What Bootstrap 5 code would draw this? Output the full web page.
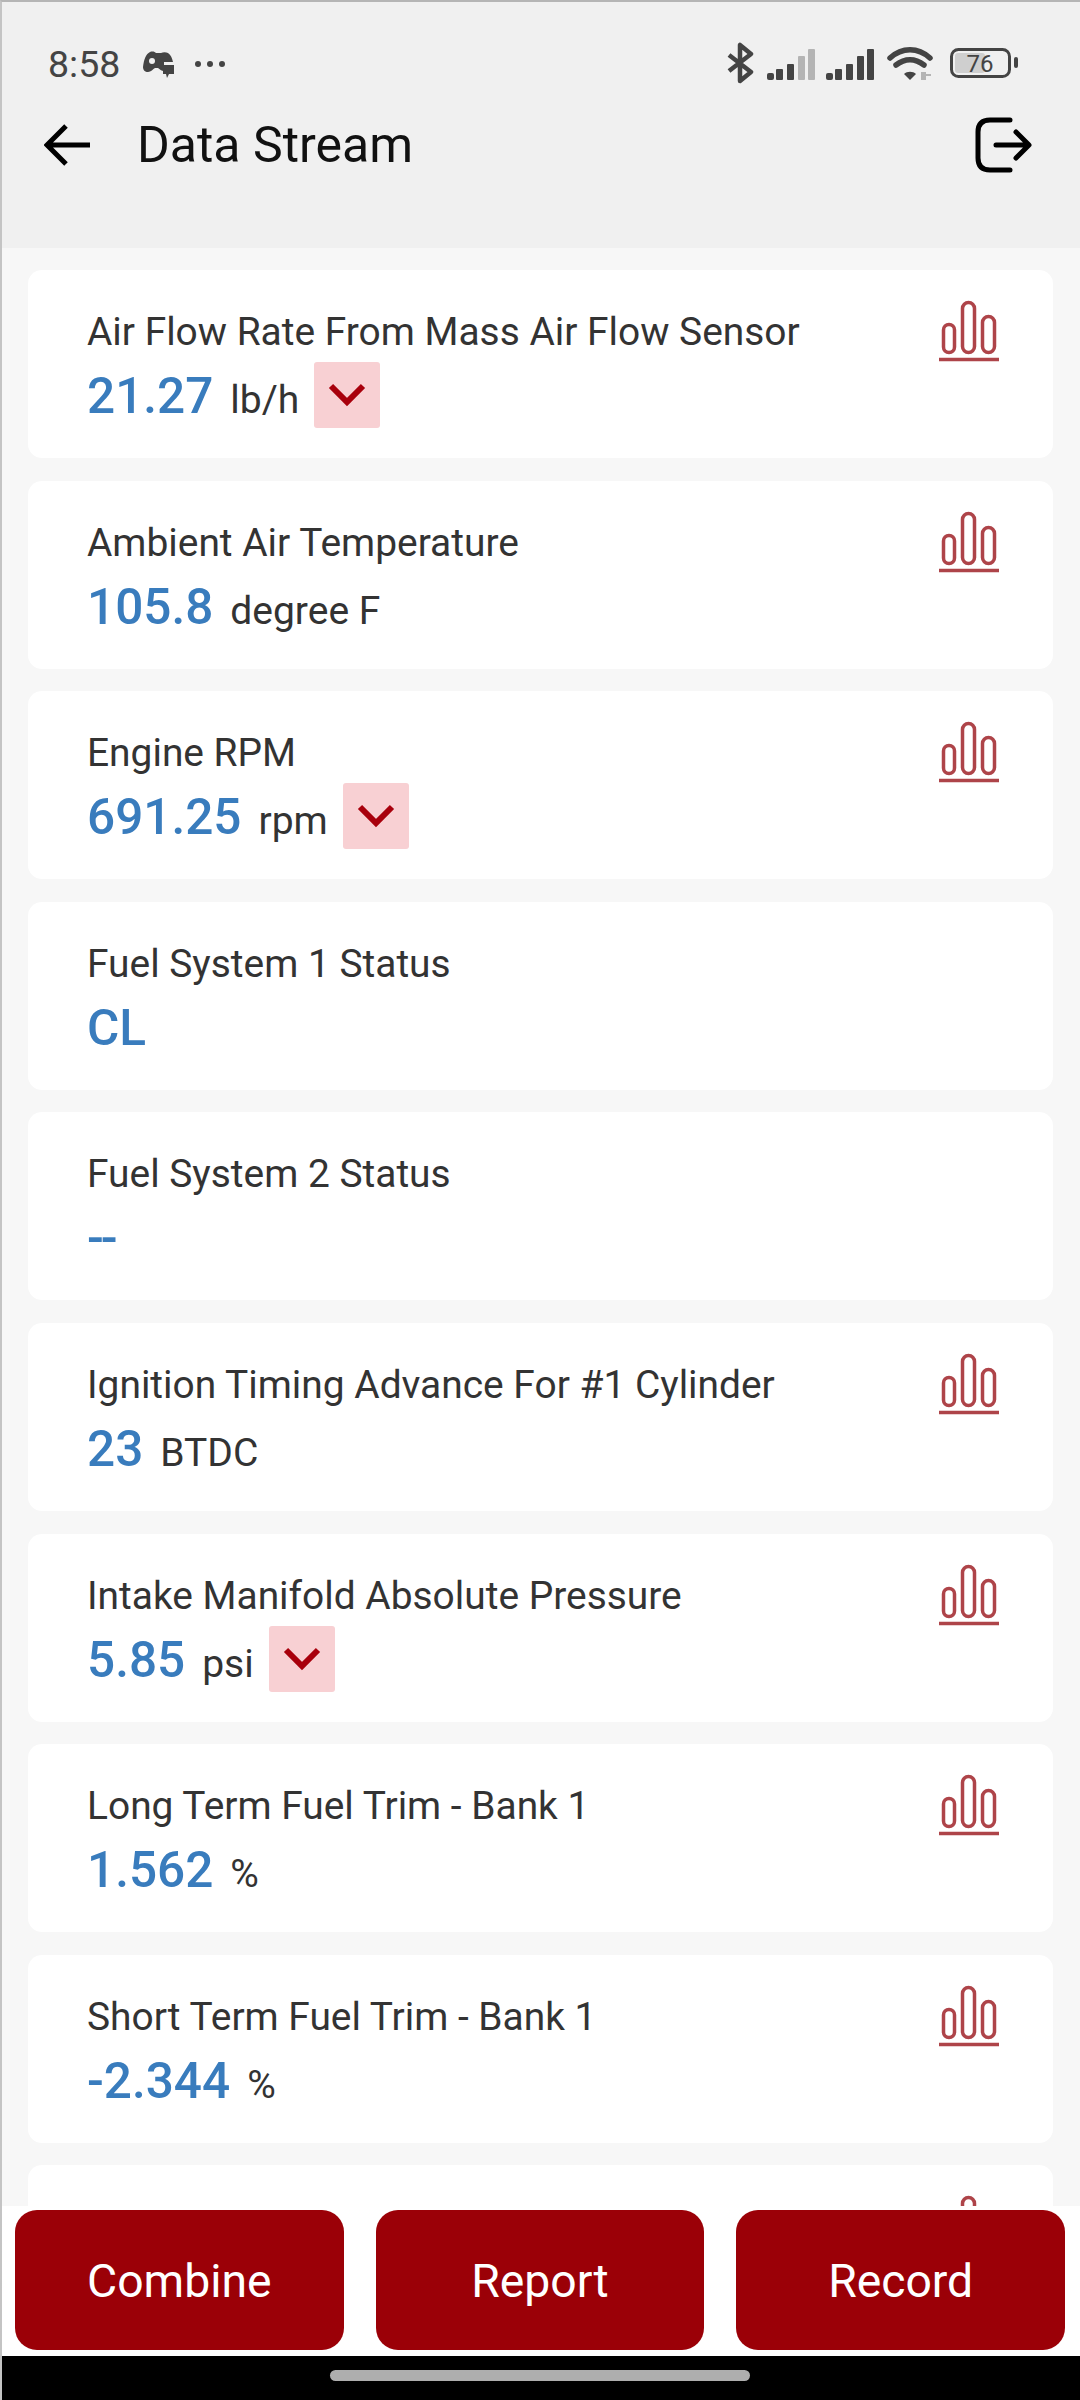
<!DOCTYPE html>
<html lang="en">
<head>
    <meta charset="UTF-8">
    <meta name="viewport" content="width=device-width, initial-scale=1.0">
    <title>Data Stream</title>
    <link href="https://cdn.jsdelivr.net/npm/bootstrap@5.3.0/dist/css/bootstrap.min.css" rel="stylesheet">
    <style>
        body {
            background: #f7f7f7;
            font-family: Roboto, "Liberation Sans", sans-serif;
        }
        .screen {
            height: 2400px;
            overflow: hidden;
            border-top: 2px solid #b5b5b5;
            border-left: 2px solid #c4c4c4;
        }
        .top-area {
            height: 246px;
            background: #f0f0f0;
            flex: none;
        }
        .status-row {
            height: 103px;
            padding: 31px 58px 10px 46px;
            color: #444;
        }
        .clock {
            font-size: 37.5px;
            line-height: 40px;
            margin-right: 22px;
        }
        .more-dots {
            margin-left: 20px;
        }
        .status-icons {
            margin-left: auto;
        }
        .title-row {
            height: 80px;
            padding: 0 48px 0 42px;
        }
        .screen-title {
            font-size: 50px;
            font-weight: 400;
            color: #111;
            margin: 0 0 0 45px;
        }
        .stream-list {
            flex: 1 1 auto;
            min-height: 0;
            overflow: hidden;
            padding: 22px 27px 0 26px;
            gap: 22.6px;
        }
        .data-item {
            flex: none;
            height: 188px;
            background: #fff;
            border-radius: 14px;
            padding: 40px 54px 0 59px;
        }
        .trend-icon {
            margin-top: -11px;
            flex: none;
        }
        .item-name {
            font-size: 38.9px;
            line-height: 44px;
            color: #333;
        }
        .value-row {
            height: 66px;
            margin-top: 8px;
        }
        .item-value {
            font-size: 49.5px;
            font-weight: 500;
            color: #397cbd;
            line-height: 68px;
        }
        .tight-dash {
            letter-spacing: -3px;
        }
        .item-unit {
            font-size: 39px;
            color: #333;
            margin-left: 17px;
        }
        .trend-box {
            width: 66px;
            height: 66px;
            margin-left: 15px;
            background: #f8d0d3;
            border-radius: 3px;
            align-self: center;
        }
        .bottom-bar {
            flex: none;
            height: 150px;
            background: #fff;
            padding: 4px 15px 6px 13px;
            gap: 32px;
        }
        .action-btn {
            flex: 1 1 0;
            background: #9b0007;
            color: #fff;
            border: 0;
            border-radius: 22px;
            padding-top: 10px;
            font-size: 46.3px;
            font-family: Roboto, sans-serif;
        }
        .nav-strip {
            flex: none;
            height: 44px;
            background: #000;
            margin-left: -2px;
        }
        .home-pill {
            width: 420px;
            height: 11px;
            margin: 14px auto 0;
            background: #aeaeae;
            border-radius: 6px;
        }
    </style>
</head>
<body>
    <div class="screen d-flex flex-column">
        <div class="top-area">
            <div class="status-row d-flex align-items-center">
                <span class="clock">8:58</span>
                <svg width="32" height="28" viewBox="0 0 32 28"><path d="M1 17C2 9 4 4 8 2c3-1 5 0 6 1h5c2-1 5-1 7 0 3 2 4 5 5 9h-9v9c-3 0-4-2-6-3h-3c-2 1-4 4-7 4-3 0-5-2-5-5z" fill="#444"/><circle cx="10" cy="11" r="3" fill="#f0f0f0"/><path d="M21 15h11v9h-5l-2 4-1-4h-3z" fill="#444"/></svg>
                <svg class="more-dots" width="32" height="8" viewBox="0 0 32 8"><circle cx="4" cy="4" r="3" fill="#444"/><circle cx="16" cy="4" r="3" fill="#444"/><circle cx="28" cy="4" r="3" fill="#444"/></svg>
                <svg class="status-icons" width="296" height="44" viewBox="0 0 296 44">
                    <path d="M3 29 25 12 14 3v36l11-9L3 13" fill="none" stroke="#444" stroke-width="4.5" stroke-linejoin="round"/>
                    <g fill="#444">
                        <rect x="41" y="31" width="7" height="7" rx="2"/><rect x="50" y="27" width="7" height="11" rx="1"/><rect x="61" y="22" width="7" height="16" rx="1"/>
                        <rect x="72" y="14" width="7" height="24" rx="1" fill="#b4b4b4"/><rect x="82" y="7" width="7" height="31" rx="1" fill="#b4b4b4"/>
                        <rect x="100" y="31" width="7" height="7" rx="2"/><rect x="109" y="27" width="7" height="11" rx="1"/><rect x="120" y="22" width="7" height="16" rx="1"/><rect x="131" y="14" width="7" height="24" rx="1"/><rect x="141" y="7" width="7" height="31" rx="1"/>
                        <path d="M184 38l-6-6c3-3 9-3 12 0z"/>
                        <path d="M195 30h5v2h5v2h-5v4h-5z" fill="#b4b4b4"/>
                    </g>
                    <path d="M164 16c12-11 28-11 40 0M170 23c9-7 19-7 28 0" fill="none" stroke="#444" stroke-width="5.5" stroke-linecap="round"/>
                    <rect x="225.500" y="7.500" width="58" height="27" rx="7" fill="none" stroke="#444" stroke-width="3"/>
                    <rect x="229" y="11" width="30" height="20" rx="3" fill="#cfcfcf"/>
                    <rect x="288" y="15" width="4" height="11" rx="2" fill="#444"/>
                    <text x="254" y="30" font-size="24" fill="#444" text-anchor="middle" font-family="Roboto">76</text>
                </svg>
            </div>
            <div class="title-row d-flex align-items-center">
                <svg width="48" height="44" viewBox="0 0 48 44"><path d="M46 22H4M22 3 3 22l19 19" fill="none" stroke="#000" stroke-width="5"/></svg>
                <h1 class="screen-title">Data Stream</h1>
                <svg class="ms-auto" width="58" height="56" viewBox="0 0 58 56"><path d="M36 3H16C8 3 4 7 4 15v26c0 8 4 12 12 12h20" fill="none" stroke="#000" stroke-width="5" stroke-linecap="round"/><path d="M22 28h32M42 15l13 13-13 13" fill="none" stroke="#000" stroke-width="5" stroke-linecap="round" stroke-linejoin="round"/></svg>
            </div>
        </div>

        <div class="stream-list d-flex flex-column">
            <div class="data-item d-flex justify-content-between">
                <div>
                    <div class="item-name">Air Flow Rate From Mass Air Flow Sensor</div>
                    <div class="value-row d-flex align-items-baseline"><span class="item-value">21.27</span><span class="item-unit">lb/h</span><span class="trend-box d-flex align-items-center justify-content-center"><svg width="38" height="24" viewBox="0 0 38 24"><path d="M3 3l16 16L35 3" fill="none" stroke="#a8000c" stroke-width="6"/></svg></span></div>
                </div>
                <svg class="trend-icon" width="60" height="64" viewBox="0 0 60 64"><g fill="none" stroke="#ae4449" stroke-width="3.500"><rect x="4.500" y="25.500" width="11" height="28" rx="5.500"/><rect x="23.500" y="3.500" width="12" height="50" rx="6"/><rect x="43.500" y="17.500" width="12" height="36" rx="6"/><path d="M0 60.500h60"/></g></svg>
            </div>
            <div class="data-item d-flex justify-content-between">
                <div>
                    <div class="item-name">Ambient Air Temperature</div>
                    <div class="value-row d-flex align-items-baseline"><span class="item-value">105.8</span><span class="item-unit">degree F</span></div>
                </div>
                <svg class="trend-icon" width="60" height="64" viewBox="0 0 60 64"><g fill="none" stroke="#ae4449" stroke-width="3.500"><rect x="4.500" y="25.500" width="11" height="28" rx="5.500"/><rect x="23.500" y="3.500" width="12" height="50" rx="6"/><rect x="43.500" y="17.500" width="12" height="36" rx="6"/><path d="M0 60.500h60"/></g></svg>
            </div>
            <div class="data-item d-flex justify-content-between">
                <div>
                    <div class="item-name">Engine RPM</div>
                    <div class="value-row d-flex align-items-baseline"><span class="item-value">691.25</span><span class="item-unit">rpm</span><span class="trend-box d-flex align-items-center justify-content-center"><svg width="38" height="24" viewBox="0 0 38 24"><path d="M3 3l16 16L35 3" fill="none" stroke="#a8000c" stroke-width="6"/></svg></span></div>
                </div>
                <svg class="trend-icon" width="60" height="64" viewBox="0 0 60 64"><g fill="none" stroke="#ae4449" stroke-width="3.500"><rect x="4.500" y="25.500" width="11" height="28" rx="5.500"/><rect x="23.500" y="3.500" width="12" height="50" rx="6"/><rect x="43.500" y="17.500" width="12" height="36" rx="6"/><path d="M0 60.500h60"/></g></svg>
            </div>
            <div class="data-item">
                <div class="item-name">Fuel System 1 Status</div>
                <div class="value-row d-flex align-items-baseline"><span class="item-value">CL</span></div>
            </div>
            <div class="data-item">
                <div class="item-name">Fuel System 2 Status</div>
                <div class="value-row d-flex align-items-baseline"><span class="item-value tight-dash">--</span></div>
            </div>
            <div class="data-item d-flex justify-content-between">
                <div>
                    <div class="item-name">Ignition Timing Advance For #1 Cylinder</div>
                    <div class="value-row d-flex align-items-baseline"><span class="item-value">23</span><span class="item-unit">BTDC</span></div>
                </div>
                <svg class="trend-icon" width="60" height="64" viewBox="0 0 60 64"><g fill="none" stroke="#ae4449" stroke-width="3.500"><rect x="4.500" y="25.500" width="11" height="28" rx="5.500"/><rect x="23.500" y="3.500" width="12" height="50" rx="6"/><rect x="43.500" y="17.500" width="12" height="36" rx="6"/><path d="M0 60.500h60"/></g></svg>
            </div>
            <div class="data-item d-flex justify-content-between">
                <div>
                    <div class="item-name">Intake Manifold Absolute Pressure</div>
                    <div class="value-row d-flex align-items-baseline"><span class="item-value">5.85</span><span class="item-unit">psi</span><span class="trend-box d-flex align-items-center justify-content-center"><svg width="38" height="24" viewBox="0 0 38 24"><path d="M3 3l16 16L35 3" fill="none" stroke="#a8000c" stroke-width="6"/></svg></span></div>
                </div>
                <svg class="trend-icon" width="60" height="64" viewBox="0 0 60 64"><g fill="none" stroke="#ae4449" stroke-width="3.500"><rect x="4.500" y="25.500" width="11" height="28" rx="5.500"/><rect x="23.500" y="3.500" width="12" height="50" rx="6"/><rect x="43.500" y="17.500" width="12" height="36" rx="6"/><path d="M0 60.500h60"/></g></svg>
            </div>
            <div class="data-item d-flex justify-content-between">
                <div>
                    <div class="item-name">Long Term Fuel Trim - Bank 1</div>
                    <div class="value-row d-flex align-items-baseline"><span class="item-value">1.562</span><span class="item-unit">%</span></div>
                </div>
                <svg class="trend-icon" width="60" height="64" viewBox="0 0 60 64"><g fill="none" stroke="#ae4449" stroke-width="3.500"><rect x="4.500" y="25.500" width="11" height="28" rx="5.500"/><rect x="23.500" y="3.500" width="12" height="50" rx="6"/><rect x="43.500" y="17.500" width="12" height="36" rx="6"/><path d="M0 60.500h60"/></g></svg>
            </div>
            <div class="data-item d-flex justify-content-between">
                <div>
                    <div class="item-name">Short Term Fuel Trim - Bank 1</div>
                    <div class="value-row d-flex align-items-baseline"><span class="item-value">-2.344</span><span class="item-unit">%</span></div>
                </div>
                <svg class="trend-icon" width="60" height="64" viewBox="0 0 60 64"><g fill="none" stroke="#ae4449" stroke-width="3.500"><rect x="4.500" y="25.500" width="11" height="28" rx="5.500"/><rect x="23.500" y="3.500" width="12" height="50" rx="6"/><rect x="43.500" y="17.500" width="12" height="36" rx="6"/><path d="M0 60.500h60"/></g></svg>
            </div>
            <div class="data-item d-flex justify-content-end">
                <svg class="trend-icon" width="60" height="64" viewBox="0 0 60 64"><g fill="none" stroke="#ae4449" stroke-width="3.500"><rect x="4.500" y="25.500" width="11" height="28" rx="5.500"/><rect x="23.500" y="3.500" width="12" height="50" rx="6"/><rect x="43.500" y="17.500" width="12" height="36" rx="6"/><path d="M0 60.500h60"/></g></svg>
            </div>
        </div>

        <div class="bottom-bar d-flex">
            <button type="button" class="btn action-btn">Combine</button>
            <button type="button" class="btn action-btn">Report</button>
            <button type="button" class="btn action-btn">Record</button>
        </div>
        <div class="nav-strip"><div class="home-pill"></div></div>
    </div>
    <script src="https://cdn.jsdelivr.net/npm/bootstrap@5.3.0/dist/js/bootstrap.bundle.min.js"></script>
</body>
</html>
